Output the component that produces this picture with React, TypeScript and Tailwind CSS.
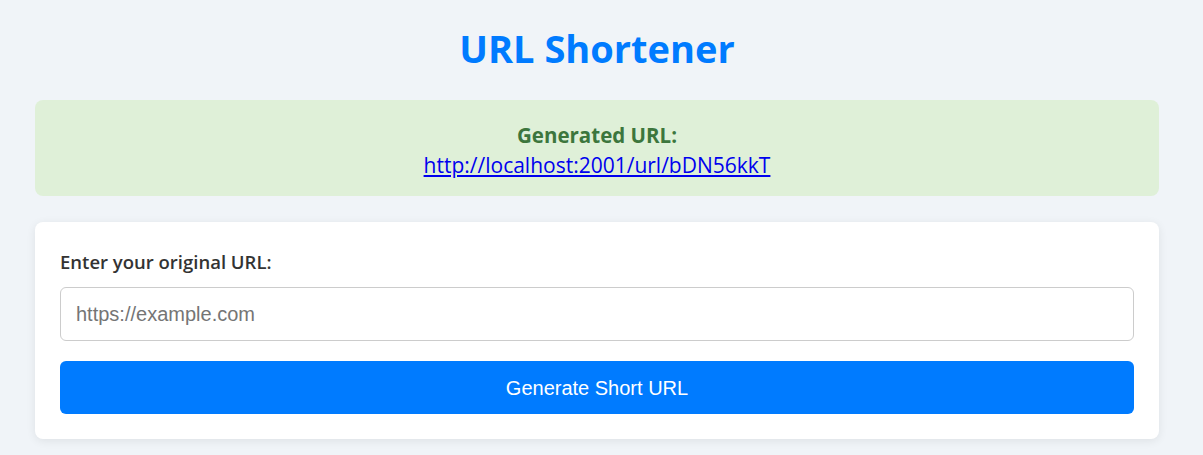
export default function App() {
  return (
    <div className="min-h-[455px] bg-[#f0f4f8] pt-[24px]" style={{ fontFamily: '"Open Sans", sans-serif' }}>
      <div className="ml-[35px] w-[1124px]">
        <h1 className="text-center text-[38px] leading-[48px] font-bold text-[#007bff] mb-[28px]">URL Shortener</h1>
        <div className="h-[96px] rounded-[8px] bg-[#dff0d8] pt-[20px] text-center text-[21px] leading-[30px]">
          <div className="font-bold text-[20.5px] text-[#3c763d]">Generated URL:</div>
          <div className="h-[30px]">
            <a href="#" className="text-[#0000ee] underline">http://localhost:2001/url/bDN56kkT</a>
          </div>
        </div>
        <div className="mt-[26px] rounded-[8px] bg-white p-[25px] shadow-[0_2px_10px_rgba(0,0,0,0.08)]">
          <label className="block text-[18.5px] leading-[30px] font-semibold text-[#333] mb-[10px]">Enter your original URL:</label>
          <input
            placeholder="https://example.com"
            className="block w-full h-[54px] rounded-[6px] border border-[#ccc] px-[15px] text-[20px] placeholder:text-[#757575] outline-none"
            style={{ fontFamily: '"Liberation Sans", Arial, sans-serif' }}
          />
          <button
            className="mt-[20px] block w-full h-[53px] rounded-[6px] bg-[#007bff] text-white text-[20px]"
            style={{ fontFamily: '"Liberation Sans", Arial, sans-serif' }}
          >
            Generate Short URL
          </button>
        </div>
      </div>
    </div>
  );
}
